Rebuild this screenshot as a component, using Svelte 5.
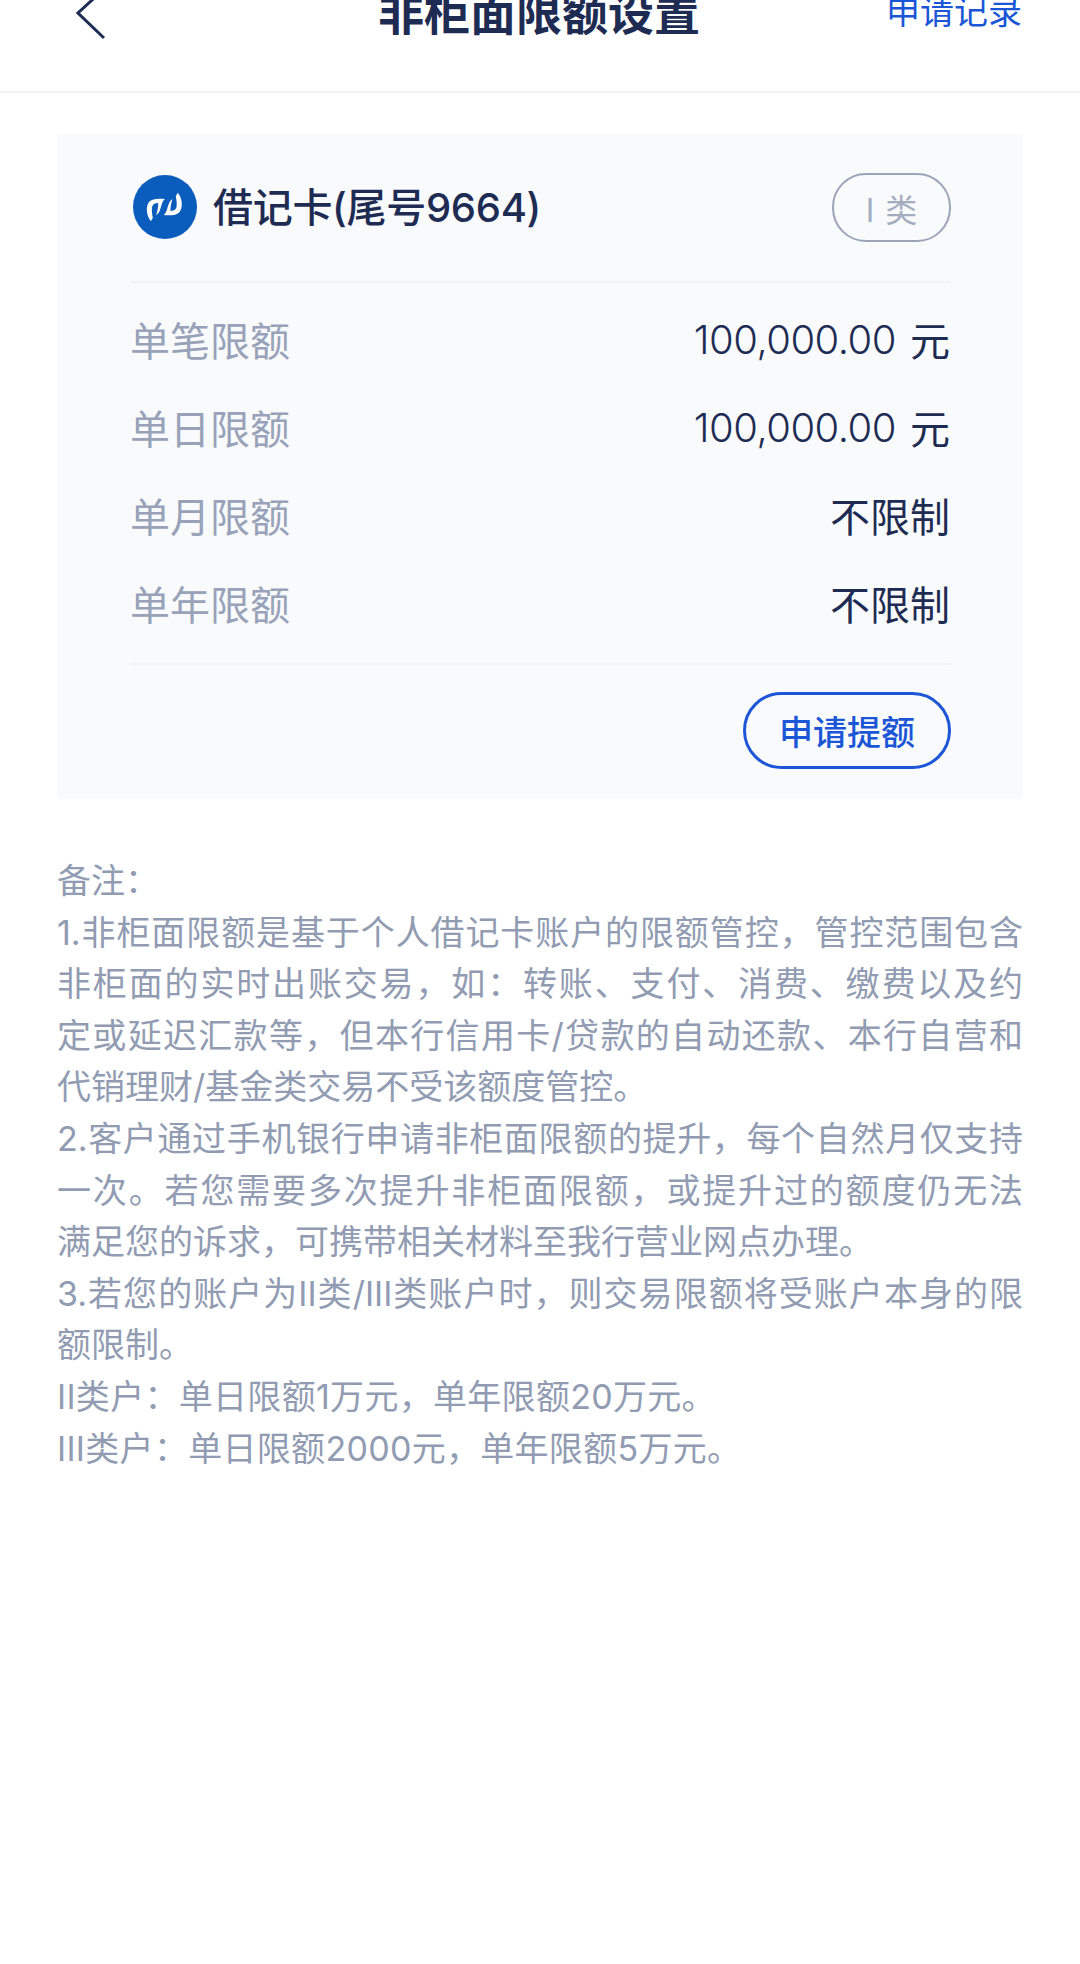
<script>
  const rows = [
    { label: '单笔限额', num: '100,000.00', unit: '元' },
    { label: '单日限额', num: '100,000.00', unit: '元' },
    { label: '单月限额', unit: '不限制' },
    { label: '单年限额', unit: '不限制' }
  ];
  // The reference breaks and justifies these lines by hand.
  const notes = [
    { text: '备注：' },
    { text: '1.非柜面限额是基于个人借记卡账户的限额管控，管控范围包含', fill: true },
    { text: '非柜面的实时出账交易，如：转账、支付、消费、缴费以及约', fill: true },
    { text: '定或延迟汇款等，但本行信用卡/贷款的自动还款、本行自营和', fill: true },
    { text: '代销理财/基金类交易不受该额度管控。' },
    { text: '2.客户通过手机银行申请非柜面限额的提升，每个自然月仅支持', fill: true },
    { text: '一次。若您需要多次提升非柜面限额，或提升过的额度仍无法', fill: true },
    { text: '满足您的诉求，可携带相关材料至我行营业网点办理。' },
    { text: '3.若您的账户为II类/III类账户时，则交易限额将受账户本身的限', fill: true },
    { text: '额限制。' },
    { text: 'II类户：单日限额1万元，单年限额20万元。', wide: true },
    { text: 'III类户：单日限额2000元，单年限额5万元。', wide: true }
  ];
</script>

<div class="page">
  <header class="header">
    <svg class="back" width="32" height="52" viewBox="0 0 32 52" aria-hidden="true">
      <path d="M28 1 L2 25 L28 50" fill="none" stroke="#1e2c54" stroke-width="3" />
    </svg>
    <h1 class="title">非柜面限额设置</h1>
    <span class="link">申请记录</span>
  </header>

  <section class="card">
    <div class="card-head">
      <div class="bank">
        <svg class="logo" width="64" height="64" viewBox="15 13 190 190" aria-hidden="true">
          <circle cx="110" cy="108" r="95" fill="#0a5dbd" />
          <g fill="#fff">
            <path d="M68 150 C54 134 52 104 64 92 C72 84 86 82 110 84 C100 92 100 104 96 114 C94 122 90 128 84 132 C88 118 90 106 90 96 C82 96 76 98 73 104 C69 112 72 130 74 140 Z" />
            <path transform="rotate(180 108 108)" d="M68 150 C54 134 52 104 64 92 C72 84 86 82 110 84 C100 92 100 104 96 114 C94 122 90 128 84 132 C88 118 90 106 90 96 C82 96 76 98 73 104 C69 112 72 130 74 140 Z" />
          </g>
        </svg>
        <span class="bank-name">借记卡(尾号9664)</span>
      </div>
      <span class="tag">I 类</span>
    </div>

    <div class="limits">
      {#each rows as row}
        <div class="row">
          <span class="label">{row.label}</span>
          <span class="value">
            {#if row.num}<span class="num">{row.num}</span>{/if}
            <span>{row.unit}</span>
          </span>
        </div>
      {/each}
    </div>

    <div class="actions">
      <button class="apply" type="button">申请提额</button>
    </div>
  </section>

  <section class="notes">
    {#each notes as note}
      <p class:fill={note.fill} class:wide={note.wide}>{note.text}</p>
    {/each}
  </section>
</div>

<style>
  :global(body) {
    margin: 0;
    background: #fff;
  }
  .page {
    height: 1964px;
    overflow: hidden;
    font-family: Inter, "Noto Sans CJK SC", sans-serif;
    background: #fff;
    color: #1e2c54;
  }
  .header {
    height: 93px;
    box-sizing: border-box;
    padding: 0 58px 0 76px;
    display: grid;
    grid-template-columns: 1fr auto 1fr;
    align-items: start;
    border-bottom: 2px solid #f2f3f7;
    overflow: hidden;
  }
  .back {
    margin-top: -12px;
  }
  .title {
    margin: -19px 0 0;
    font-size: 46px;
    line-height: 64px;
    font-weight: 700;
    transform: translateX(-10px);
  }
  .link {
    justify-self: end;
    margin-top: -11px;
    font-size: 34px;
    line-height: 46px;
    color: #1a56d6;
  }
  .card {
    margin: 41px 57px 0;
    height: 665px;
    box-sizing: border-box;
    background: #f9fafc;
    border-radius: 4px;
    padding: 39px 72px 0 74px;
  }
  .card-head {
    height: 110px;
    box-sizing: border-box;
    display: flex;
    justify-content: space-between;
    align-items: flex-start;
    border-bottom: 2px solid #f1f2f6;
  }
  .bank {
    display: flex;
    align-items: flex-start;
    gap: 16px;
    padding: 2px 0 0 2px;
  }
  .bank-name {
    font-size: 40px;
    line-height: 64px;
    font-weight: 500;
    letter-spacing: -0.3px;
    padding-top: 1px;
  }
  .tag {
    width: 119px;
    height: 69px;
    box-sizing: border-box;
    border: 2px solid #9aa4ba;
    border-radius: 34px;
    display: flex;
    align-items: center;
    justify-content: center;
    font-size: 32px;
    word-spacing: 2px;
    color: #a4adc0;
  }
  .limits {
    padding: 12px 0 16px;
    border-bottom: 2px solid #f1f2f6;
  }
  .row {
    height: 88px;
    display: flex;
    justify-content: space-between;
    align-items: center;
    font-size: 40px;
  }
  .label {
    color: #98a2b8;
    margin-left: -1px;
  }
  .value {
    color: #1e2c54;
    display: flex;
    align-items: center;
    gap: 14px;
    margin-right: 1px;
  }
  .num {
    letter-spacing: -0.5px;
    font-weight: 300;
  }
  .actions {
    display: flex;
    justify-content: flex-end;
    padding-top: 27px;
  }
  .apply {
    width: 208px;
    height: 77px;
    box-sizing: border-box;
    border: 3px solid #1a56d6;
    border-radius: 39px;
    background: transparent;
    color: #1a56d6;
    font: 500 34px "Noto Sans CJK SC", sans-serif;
    padding: 0;
  }
  .notes {
    margin: 56px 57px 0;
    color: #919bb2;
    font-size: 34px;
    line-height: 51.6px;
  }
  .notes p {
    margin: 0;
    white-space: nowrap;
  }
  .notes p.fill {
    white-space: normal;
    text-align: justify;
    text-align-last: justify;
  }
  .notes p.wide {
    letter-spacing: 0.3px;
  }
</style>
